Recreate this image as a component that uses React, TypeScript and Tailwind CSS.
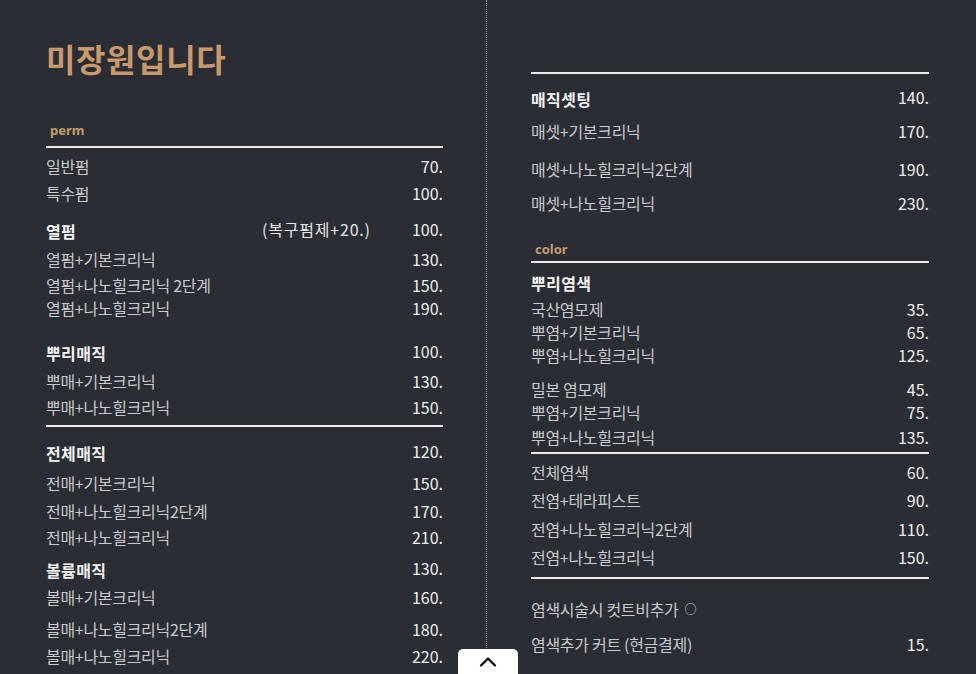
import { ChevronUp } from "lucide-react";

type Row = {
  kind: "head" | "item" | "line" | "label" | "note";
  mt: string;
  text?: string;
  price?: string;
  extra?: string;
};

const leftRows: Row[] = [
  { kind: "label", text: "perm", mt: "mt-[45px]" },
  { kind: "line", mt: "mt-[7px]" },
  { kind: "item", text: "일반펌", price: "70.", mt: "mt-[7px]" },
  { kind: "item", text: "특수펌", price: "100.", mt: "mt-[5px]" },
  { kind: "head", text: "열펌", extra: "(복구펌제+20.)", price: "100.", mt: "mt-[16px]" },
  { kind: "item", text: "열펌+기본크리닉", price: "130.", mt: "mt-[6px]" },
  { kind: "item", text: "열펌+나노힐크리닉 2단계", price: "150.", mt: "mt-[4px]" },
  { kind: "item", text: "열펌+나노힐크리닉", price: "190.", mt: "mt-[1px]" },
  { kind: "head", text: "뿌리매직", price: "100.", mt: "mt-[23px]" },
  { kind: "item", text: "뿌매+기본크리닉", price: "130.", mt: "mt-[6px]" },
  { kind: "item", text: "뿌매+나노힐크리닉", price: "150.", mt: "mt-[4px]" },
  { kind: "line", mt: "mt-[7px]" },
  { kind: "head", text: "전체매직", price: "120.", mt: "mt-[15px]" },
  { kind: "item", text: "전매+기본크리닉", price: "150.", mt: "mt-[8px]" },
  { kind: "item", text: "전매+나노힐크리닉2단계", price: "170.", mt: "mt-[6px]" },
  { kind: "item", text: "전매+나노힐크리닉", price: "210.", mt: "mt-[4px]" },
  { kind: "head", text: "볼륨매직", price: "130.", mt: "mt-[11px]" },
  { kind: "item", text: "볼매+기본크리닉", price: "160.", mt: "mt-[5px]" },
  { kind: "item", text: "볼매+나노힐크리닉2단계", price: "180.", mt: "mt-[10px]" },
  { kind: "item", text: "볼매+나노힐크리닉", price: "220.", mt: "mt-[5px]" },
];

const rightRows: Row[] = [
  { kind: "line", mt: "mt-0" },
  { kind: "head", text: "매직셋팅", price: "140.", mt: "mt-[14px]" },
  { kind: "item", text: "매셋+기본크리닉", price: "170.", mt: "mt-[10px]" },
  { kind: "item", text: "매셋+나노힐크리닉2단계", price: "190.", mt: "mt-[16px]" },
  { kind: "item", text: "매셋+나노힐크리닉", price: "230.", mt: "mt-[12px]" },
  { kind: "label", text: "color", mt: "mt-[28px]" },
  { kind: "line", mt: "mt-[3px]" },
  { kind: "head", text: "뿌리염색", mt: "mt-[9px]" },
  { kind: "item", text: "국산염모제", price: "35.", mt: "mt-[4px]" },
  { kind: "item", text: "뿌염+기본크리닉", price: "65.", mt: "mt-[1px]" },
  { kind: "item", text: "뿌염+나노힐크리닉", price: "125.", mt: "mt-[1px]" },
  { kind: "item", text: "밀본 염모제", price: "45.", mt: "mt-[12px]" },
  { kind: "item", text: "뿌염+기본크리닉", price: "75.", mt: "mt-[1px]" },
  { kind: "item", text: "뿌염+나노힐크리닉", price: "135.", mt: "mt-[3px]" },
  { kind: "line", mt: "mt-[4px]" },
  { kind: "item", text: "전체염색", price: "60.", mt: "mt-[7px]" },
  { kind: "item", text: "전염+테라피스트", price: "90.", mt: "mt-[6px]" },
  { kind: "item", text: "전염+나노힐크리닉2단계", price: "110.", mt: "mt-[7px]" },
  { kind: "item", text: "전염+나노힐크리닉", price: "150.", mt: "mt-[6px]" },
  { kind: "line", mt: "mt-[9px]" },
  { kind: "note", text: "염색시술시 컷트비추가", mt: "mt-[19px]" },
  { kind: "item", text: "염색추가 커트 (현금결제)", price: "15.", mt: "mt-[13px]" },
];

const MenuRow = ({ row }: { row: Row }) => {
  if (row.kind === "line") {
    return <div className={`h-[2px] bg-[#ececec] ${row.mt}`} />;
  }
  if (row.kind === "label") {
    return (
      <div
        className={`flex h-[16px] items-center pl-[4px] font-['Noto_Sans','Noto_Sans_CJK_KR',sans-serif] text-[13px] font-bold text-[#c49b6d] ${row.mt}`}
      >
        {row.text}
      </div>
    );
  }
  if (row.kind === "note") {
    return (
      <div className={`flex h-[22px] items-center ${row.mt}`}>
        <span className="text-[16px] tracking-[-0.3px] text-[#c9cacd]">{row.text}</span>
        <span className="ml-[6px] text-[12px] text-[#c9cacd]">○</span>
      </div>
    );
  }
  return (
    <div className={`flex h-[22px] items-center ${row.mt}`}>
      {row.kind === "head" ? (
        <span className="w-[216px] text-[16px] font-bold tracking-[0.4px] text-[#f2f2f2]">
          {row.text}
        </span>
      ) : (
        <span className="text-[16px] tracking-[-0.3px] text-[#c9cacd]">{row.text}</span>
      )}
      {row.extra && (
        <span className="mb-[4px] text-[16px] tracking-[0.8px] text-[#e6e6e6]">{row.extra}</span>
      )}
      {row.price && (
        <span
          className={`ml-auto text-[16px] text-[#eeeeee] ${
            row.kind === "head" ? "mb-[5px]" : ""
          }`}
        >
          {row.price}
        </span>
      )}
    </div>
  );
};

export default function App() {
  return (
    <div className="relative h-[674px] w-[976px] overflow-hidden bg-[#2a2d34] font-['Noto_Sans_CJK_KR','Noto_Sans',sans-serif]">
      <div className="flex h-full">
        <div className="w-[486px] shrink-0 pl-[46px] pr-[43px] pt-[38px]">
          <h1 className="flex h-[40px] items-center text-[32px] font-bold tracking-[0.6px] text-[#c8996a]">
            미장원입니다
          </h1>
          {leftRows.map((row, i) => (
            <MenuRow key={i} row={row} />
          ))}
        </div>
        <div className="w-px shrink-0 border-l border-dotted border-[#8d9096]" />
        <div className="flex-1 pl-[44px] pr-[47px] pt-[72px]">
          {rightRows.map((row, i) => (
            <MenuRow key={i} row={row} />
          ))}
        </div>
      </div>
      <button className="absolute bottom-0 left-[458px] flex h-[25px] w-[60px] items-center justify-center rounded-t-[5px] bg-white">
        <ChevronUp size={28} strokeWidth={2} className="text-[#111]" />
      </button>
    </div>
  );
}
